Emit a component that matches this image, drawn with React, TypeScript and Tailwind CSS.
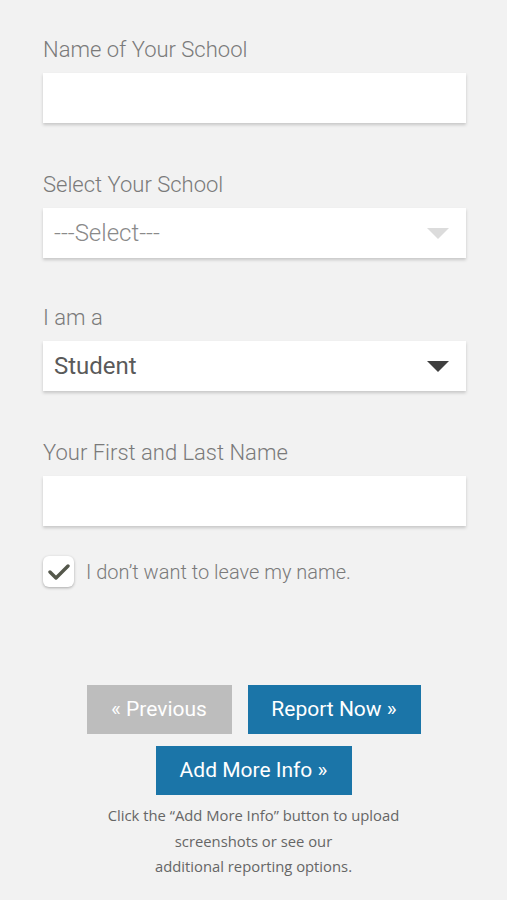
import React from "react";

const Arrow = ({ color }: { color: string }) => (
  <svg width="22" height="11" viewBox="0 0 22 11" className="shrink-0">
    <path d="M0 0 L22 0 L11 11 Z" fill={color} />
  </svg>
);

const Label = ({ children, className = "" }: { children: React.ReactNode; className?: string }) => (
  <div className={`pt-[1px] text-[22px] leading-[24px] font-light text-[#7a7a7a] ${className}`} style={{ fontFamily: "Roboto, sans-serif" }}>
    {children}
  </div>
);

const boxCls = "h-[50px] bg-white shadow-[0_2px_3px_rgba(0,0,0,0.18)] mt-[11px]";

export default function App() {
  return (
    <div className="min-h-[900px] bg-[#f2f2f2] px-[43px] pt-[37px] pr-[41px]" style={{ fontFamily: "Roboto, sans-serif" }}>
      <Label>Name of Your School</Label>
      <div className={boxCls} />

      <Label className="mt-[49px]">Select Your School</Label>
      <div className={`${boxCls} flex items-center justify-between pl-[11px] pr-[17px] bg-[#fdfdfd]`}>
        <span className="text-[24px] font-light text-[#8a8a8a]">---Select---</span>
        <Arrow color="#dcdcdc" />
      </div>

      <Label className="mt-[47px]">I am a</Label>
      <div className={`${boxCls} flex items-center justify-between pl-[11px] pr-[17px] h-[49px]`}>
        <span className="text-[24px] font-normal text-[#5a5a5a]">Student</span>
        <Arrow color="#3f3f3f" />
      </div>

      <Label className="mt-[49px]">Your First and Last Name</Label>
      <div className={boxCls} />

      <div className="mt-[30px] flex items-center gap-[12px]">
        <div className="w-[31px] h-[31px] rounded-[6px] bg-white shadow-[0_1px_3px_rgba(0,0,0,0.3)] flex items-center justify-center">
          <svg width="22" height="18" viewBox="0 0 22 18">
            <path d="M2 9 L8 15 L20 3" fill="none" stroke="#54574b" strokeWidth="3.4" strokeLinecap="round" strokeLinejoin="round" />
          </svg>
        </div>
        <span className="text-[20px] font-light text-[#7a7a7a]">I don’t want to leave my name.</span>
      </div>

      <div className="mt-[98px] flex flex-col items-center">
        <div className="flex gap-[16px] -ml-[2px]">
          <button className="w-[145px] h-[49px] bg-[#bdbdbd] text-white text-[21px]">« Previous</button>
          <button className="w-[173px] h-[49px] bg-[#1b75a8] text-white text-[21px]">Report Now »</button>
        </div>
        <button className="mt-[12px] w-[196px] h-[49px] bg-[#1b75a8] text-white text-[21px] -ml-[2px]">Add More Info »</button>
        <p className="mt-[8px] text-center text-[14.8px] leading-[25.5px] text-[#666666] -ml-[2px]" style={{ fontFamily: "'Open Sans', sans-serif" }}>
          Click the “Add More Info” button to upload<br />screenshots or see our<br />additional reporting options.
        </p>
      </div>
    </div>
  );
}
